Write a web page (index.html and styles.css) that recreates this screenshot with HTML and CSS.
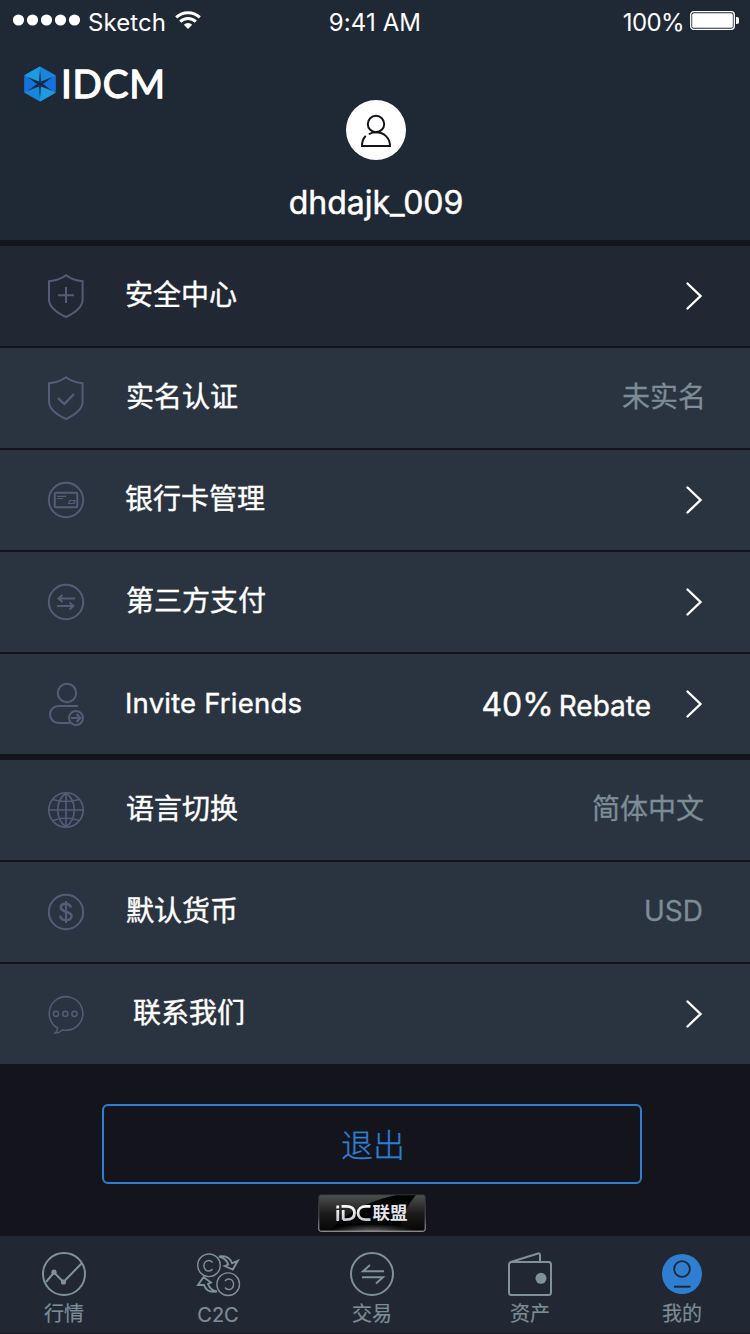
FILE: index.html
```html
<!DOCTYPE html>
<html lang="zh-CN">
<head>
<meta charset="utf-8">
<title>IDCM</title>
<link rel="stylesheet" href="styles.css">
</head>
<body>
<div class="screen">
  <header class="header">
    <div class="status">
      <div class="status-left">
        <svg class="dots" width="68" height="12" viewBox="0 0 68 12" fill="#fff"><circle cx="5.5" cy="6" r="5.6"/><circle cx="19.5" cy="6" r="5.6"/><circle cx="33.5" cy="6" r="5.6"/><circle cx="47.5" cy="6" r="5.6"/><circle cx="61.5" cy="6" r="5.6"/></svg>
        <span class="carrier">Sketch</span>
        <svg class="wifi" width="26" height="18" viewBox="0 0 26 18" fill="none" stroke="#fff" stroke-width="3"><path d="M1.2 6.4a17 17 0 0 1 23.6 0"/><path d="M5.2 10.6a11.2 11.2 0 0 1 15.6 0"/><path d="M13 18L8.8 13.7a6 6 0 0 1 8.4 0z" fill="#fff" stroke="none"/></svg>
      </div>
      <span class="time">9:41 AM</span>
      <div class="status-right">
        <span class="percent">100%</span>
        <svg width="49" height="20" viewBox="0 0 49 20"><rect x=".7" y=".7" width="43.6" height="17.6" rx="3" fill="none" stroke="#fff" stroke-width="1.3"/><rect x="2.2" y="2.2" width="40.6" height="14.6" rx="1.5" fill="#fff"/><path d="M46 6h1q2 0 2 2v3q0 2-2 2h-1z" fill="#fff"/></svg>
      </div>
    </div>
    <div class="brand">
      <svg width="32" height="36" viewBox="0 0 32 36">
        <path d="M16 .4L31.500 9.200v17.600L16 35.600.5 26.800V9.200z" fill="#1787dc"/>
        <path d="M16 .4V18L.5 9.200zM16 35.600V18l15.500 8.800z" fill="#1d9be0"/>
        <path d="M.5 9.200L16 18 .5 26.800zM31.500 9.200L16 18l15.500 8.800z" fill="#1571dc"/>
        <path d="M16 3l1 12.500L28.500 11 19 18l9.500 7L17 20.500 16 33l-1-12.500L3.500 25l9.500-7-9.500-7L15 15.500z" fill="#152c48"/>
      </svg>
      <span class="brand-name">IDCM</span>
    </div>
    <div class="profile">
      <div class="avatar">
        <svg width="60" height="60" viewBox="0 0 60 60" fill="none" stroke="#14141c" stroke-width="2" stroke-linecap="round"><circle cx="30" cy="24" r="8.2"/><path d="M19.2 36.5Q16 40 16 46h28c0-8-6-13.700-14-13.700-2.500 0-4.500.5-6.500 1.500"/></svg>
      </div>
      <div class="username">dhdajk_009</div>
    </div>
  </header>

  <main>
    <section class="group">
      <div class="row row-active">
        <svg class="icon" viewBox="0 0 44 44"><path d="M22 1.200Q29 6.300 38.600 7.200V25.500C38.600 34 30 39.300 22 43 14 39.300 5 34 5 25.500V7.200Q15 6.300 22 1.200z"/><path d="M22 13v16M14 21.200h16"/></svg>
        <span class="label">安全中心</span>
        <svg class="chevron" viewBox="0 0 20 30"><path d="M3.500 2.500L16.500 15 3.500 27.500"/></svg>
      </div>
      <div class="row">
        <svg class="icon" viewBox="0 0 44 44"><path d="M22 1.200Q29 6.300 38.600 7.200V25.500C38.600 34 30 39.300 22 43 14 39.300 5 34 5 25.500V7.200Q15 6.300 22 1.200z"/><path d="M14 22l6.300 6L30 18" stroke-width="2.400"/></svg>
        <span class="label shift-1">实名认证</span>
        <span class="value">未实名</span>
      </div>
      <div class="row">
        <svg class="icon" viewBox="0 0 44 44"><circle cx="22" cy="22" r="17.200"/><rect x="10.800" y="14.800" width="22.500" height="14.500" rx="1"/><g stroke-width="1.200"><path d="M13 18.300h9M13 20.500h6M26 22.500h5l-1 3h-5.500z"/></g></svg>
        <span class="label">银行卡管理</span>
        <svg class="chevron" viewBox="0 0 20 30"><path d="M3.500 2.500L16.500 15 3.500 27.500"/></svg>
      </div>
      <div class="row">
        <svg class="icon" viewBox="0 0 44 44"><circle cx="22" cy="22" r="17.200"/><path d="M31 18.500H14.500M18.500 15l-4 3.500 4 3.500M13 26h16.500M25.500 22.500l4 3.500-4 3.500"/></svg>
        <span class="label shift-1">第三方支付</span>
        <svg class="chevron" viewBox="0 0 20 30"><path d="M3.500 2.500L16.500 15 3.500 27.500"/></svg>
      </div>
      <div class="row">
        <svg class="icon" viewBox="0 0 44 44"><circle cx="23" cy="11" r="9.200"/><path d="M34 24H14.500a8.500 8.500 0 0 0 0 17H26"/><circle cx="32" cy="36" r="7"/><path d="M27 36h9M32.500 32l4 4-4 4"/></svg>
        <span class="label label-latin">Invite Friends</span>
        <span class="rebate"><b>40%</b><i>Rebate</i></span>
        <svg class="chevron" viewBox="0 0 20 30"><path d="M3.500 2.500L16.500 15 3.500 27.500"/></svg>
      </div>
    </section>

    <section class="group">
      <div class="row">
        <svg class="icon" viewBox="0 0 44 44"><g stroke-width="1.600"><circle cx="22" cy="22" r="17.200"/><path d="M22 5v34M4 22h36M22 5c-11 8-11 26 0 34M22 5c11 8 11 26 0 34M9 11.500q13 4 26 0M9 32.500q13-5 26 0"/></g></svg>
        <span class="label shift-1">语言切换</span>
        <span class="value value-edge">简体中文</span>
      </div>
      <div class="row">
        <svg class="icon" viewBox="0 0 44 44"><circle cx="22" cy="22" r="17.200"/><path stroke-width="2.500" d="M27 17.500c-.800-2.500-2.600-3.700-5.200-3.700-3 0-5 1.500-5 3.800 0 5.500 10.700 2.800 10.700 8.500 0 2.700-2.500 4.100-5.500 4.100-3.300 0-5.500-1.700-5.800-4.600"/><path d="M22 11v22"/></svg>
        <span class="label shift-1">默认货币</span>
        <span class="value value-usd">USD</span>
      </div>
      <div class="row">
        <svg class="icon" viewBox="0 0 44 44"><g stroke-width="1.500"><path d="M13.500 36A16.800 16.800 0 1 1 21.500 38.300q-1.500 0-3-.3-3.500 3.300-7.500 3 2.800-2 2.500-5z"/><circle cx="12" cy="21.800" r="2.600"/><circle cx="21.300" cy="21.800" r="2.600"/><circle cx="30.500" cy="21.800" r="2.600"/></g></svg>
        <span class="label shift-8">联系我们</span>
        <svg class="chevron" viewBox="0 0 20 30"><path d="M3.500 2.500L16.500 15 3.500 27.500"/></svg>
      </div>
    </section>

    <section class="footer">
      <button class="logout">退出</button>
      <svg class="alliance" width="108" height="38" viewBox="0 0 108 38">
        <defs>
          <linearGradient id="metal" x1="0" y1="0" x2="0" y2="1"><stop offset="0" stop-color="#505050"/><stop offset=".5" stop-color="#1c1c1c"/><stop offset="1" stop-color="#050505"/></linearGradient>
          <radialGradient id="glow" cx=".5" cy="1" r=".4"><stop offset="0" stop-color="#606060"/><stop offset="1" stop-color="#606060" stop-opacity="0"/></radialGradient>
          <linearGradient id="edge" x1="0" y1="0" x2="0" y2="1"><stop offset="0" stop-color="#333"/><stop offset=".6" stop-color="#555"/><stop offset="1" stop-color="#bbb"/></linearGradient>
          <linearGradient id="silver" gradientUnits="userSpaceOnUse" x1="0" y1="11" x2="0" y2="27"><stop offset="0" stop-color="#fff"/><stop offset="1" stop-color="#c8c8d0"/></linearGradient>
        </defs>
        <rect x="1" y="1" width="106" height="36" rx="2" fill="url(#metal)"/>
        <path d="M12 37Q34 11 78 1h20Q86 14 81 37z" fill="#030303"/>
        <rect x="1" y="20" width="106" height="17" fill="url(#glow)"/>
        <rect x=".8" y=".8" width="106.400" height="36.400" rx="2" fill="none" stroke="url(#edge)"/>
        <g fill="none" stroke="url(#silver)" stroke-width="2.800"><path d="M19.800 16L19.700 27M19.800 11.500L19.700 14.500M25.200 16v9.700M23.500 12.300H28c5.500 0 8.500 2.500 8.500 6.700s-3 6.700-8.500 6.700h-3M52.500 12.300H48c-5 0-8 2.800-8 6.700s3 6.700 8 6.700h4.500"/></g>
        <text class="alliance-text" x="54.500" y="25">联盟</text>
      </svg>
    </section>
  </main>

  <nav class="tabs">
    <div class="tab">
      <svg viewBox="0 0 48 48"><circle cx="24" cy="24" r="21"/><path d="M6 32l8-9.500L23.500 32 42 13"/><circle class="solid" cx="14" cy="22.200" r="2.600"/><circle class="solid" cx="23.500" cy="32" r="2.600"/></svg>
      <span>行情</span>
    </div>
    <div class="tab tab-latin">
      <svg viewBox="0 0 48 48"><g stroke-width="1.400"><circle cx="15" cy="15.300" r="11.300"/><circle cx="34.200" cy="34.200" r="11.300"/><path d="M18.500 12.500a4.800 5.300 0 1 0 0 6.500M31 31a4.800 5.300 0 1 1 0 6.500"/><path stroke-width="1.900" d="M25 6.500q10-2 13 6.800l5.800-2.500-5 8.700-8-3.500 3.500-1.500Q32 8 25 6.500zM23 41.500q-10 2-13-6.500H4l5.500-8 7.500 5.500-3 1.500Q16 40 23 41.500z"/></g></svg>
      <span>C2C</span>
    </div>
    <div class="tab">
      <svg viewBox="0 0 48 48"><circle cx="24" cy="24" r="21"/><path d="M36 21.300H15l7-6.300M14 27.300h21l-7 6.300"/></svg>
      <span>交易</span>
    </div>
    <div class="tab">
      <svg viewBox="0 0 48 48"><rect x="3" y="12" width="42" height="33" rx="2.500"/><path d="M4 12.300L32 3.500Q34 3 34 5v7"/><circle class="solid" cx="35" cy="28.300" r="5.500"/></svg>
      <span>资产</span>
    </div>
    <div class="tab">
      <svg viewBox="0 0 48 48"><circle cx="24" cy="24" r="20" fill="#2e7fd1" stroke="none"/><circle cx="24" cy="19" r="7.800" stroke="#1f2733" stroke-width="1.800"/><path d="M16 36.700h16.500" stroke="#1f2733"/></svg>
      <span>我的</span>
    </div>
  </nav>
</div>
</body>
</html>
```
FILE: styles.css
```css
* { box-sizing: border-box; }
body { margin: 0; background: #14141c; color: #fff; font-family: Inter, "Noto Sans CJK SC", sans-serif; }
svg { display: block; flex: none; }
.screen { width: 750px; height: 1334px; display: flex; flex-direction: column; overflow: hidden; }

.header { height: 240px; background: #1f2935; }
.status { height: 40px; padding: 0 11px 0 13px; display: grid; grid-template-columns: 1fr auto 1fr; font-size: 24px; line-height: 46px; }
.status-left, .status-right { display: flex; align-items: flex-start; }
.status-right { justify-content: flex-end; gap: 6px; }
.status-right svg { margin-top: 11px; }
.dots { margin-top: 14px; }
.carrier { margin-left: 7px; letter-spacing: .1px; }
.wifi { margin: 11px 0 0 9px; }
.time { margin-left: -2px; letter-spacing: .1px; }
.percent { letter-spacing: -.6px; }
.brand { display: flex; align-items: center; height: 36px; margin: 26px 0 0 24px; }
.brand-name { margin: 0 0 2px 5px; font: 400 38.500px/36px Lato, sans-serif; letter-spacing: .8px; -webkit-text-stroke: 1.300px #fff; }
.profile { display: flex; flex-direction: column; align-items: center; margin: -2px 0 0 2px; }
.avatar { width: 60px; height: 60px; border-radius: 50%; background: #fff; }
.username { margin-top: 23px; font-size: 32px; line-height: 40px; -webkit-text-stroke: .5px #fff; }

.group { margin-top: 6px; display: flex; flex-direction: column; gap: 2px; }
.row { height: 100px; padding: 0 46px 0 44px; background: #2a3440; display: flex; align-items: center; }
.row-active { background: #212833; }
.icon { width: 44px; height: 44px; fill: none; stroke: #535d77; stroke-width: 2; }
.label { margin: 0 auto 2px 37px; font-size: 28px; line-height: 40px; -webkit-text-stroke: .4px #fff; }
.label-latin { font-size: 27.500px; letter-spacing: .200px; }
.shift-1 { margin-left: 38px; }
.shift-8 { margin-left: 45px; }
.value { margin: 0 -2px 2px 0; font-size: 28px; line-height: 40px; color: #7c8d97; -webkit-text-stroke: .3px #7c8d97; }
.value-edge { margin-right: 0; }
.value-usd { margin-right: 1px; }
.chevron { width: 20px; height: 30px; fill: none; stroke: #fff; stroke-width: 2.400; stroke-linecap: round; }
.rebate { display: flex; align-items: baseline; gap: 5px; margin-right: 33px; -webkit-text-stroke: .4px #fff; }
.rebate b { font-size: 32px; font-weight: 400; }
.rebate i { font-size: 28px; font-style: normal; }

.footer { height: 172px; padding-top: 40px; display: flex; flex-direction: column; align-items: center; }
.logout { width: 540px; height: 80px; margin-right: 6px; padding: 0 0 2px 2px; border: 2px solid #2e7fd1; border-radius: 6px; background: none; color: #2e7fd1; font: 300 32px "Noto Sans CJK SC", sans-serif; -webkit-text-stroke: .3px #2e7fd1; }
.alliance { margin: 10px 6px 0 0; }
.alliance-text { font: 700 17.500px "Noto Sans CJK SC", sans-serif; fill: #e4e4ea; }

.tabs { height: 98px; width: 770px; margin-left: -13px; padding-top: 14px; background: #212833; border-bottom: 1px solid #171b24; display: grid; grid-template-columns: 154px 154px 154px 162px 142px; }
.tab { display: flex; flex-direction: column; align-items: center; font-size: 20px; line-height: 32px; color: #7c8d97; -webkit-text-stroke: .2px #7c8d97; }
.tab svg { width: 48px; height: 48px; fill: none; stroke: #7f929c; stroke-width: 2; }
.tab .solid { fill: #7f929c; stroke: none; }
.tab-latin span { padding-top: 1px; }
```
